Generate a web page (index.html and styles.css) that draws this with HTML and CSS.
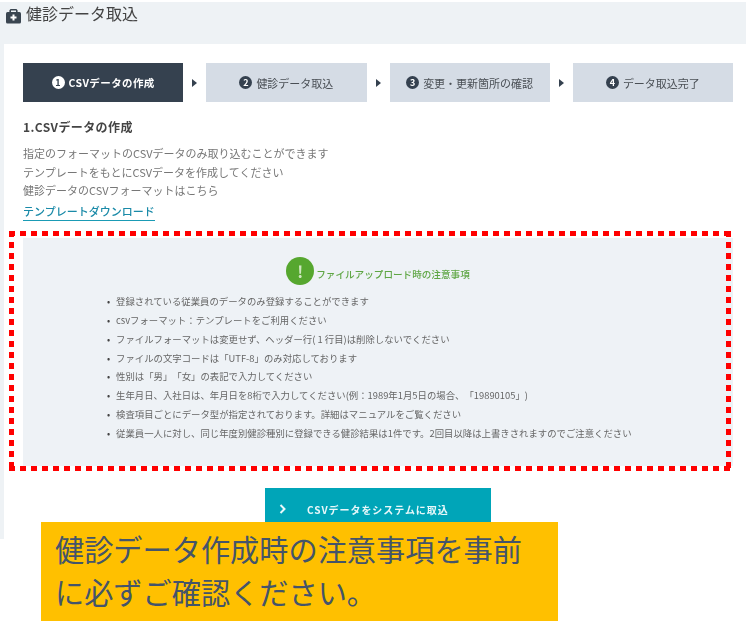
FILE: index.html
```html
<!DOCTYPE html>
<html lang="ja">
<head>
    <meta charset="UTF-8">
    <meta name="viewport" content="width=device-width, initial-scale=1.0">
    <title>健診データ取込</title>
    <link rel="stylesheet" href="styles.css">
</head>
<body>

    <div class="screen">
        <div class="page">
            <h1 class="page-title">
                <svg class="title-icon" width="15" height="15" viewBox="0 0 15 15">
                    <path d="M5 3V1.5h5V3h1.6V1.2L10.4 0H4.6L3.4 1.2V3z" fill="#3a4550"/>
                    <rect x="0" y="3" width="15" height="11.5" rx="1.5" fill="#3a4550"/>
                    <path d="M6.5 5.5h2v2h2v2h-2v2h-2v-2h-2v-2h2z" fill="#fff"/>
                </svg>
                健診データ取込
            </h1>

            <div class="card">
                <div class="steps">
                    <div class="step step-active"><span class="step-num">1</span><b class="step-csv">CSVデータの作成</b></div>
                    <div class="step-arrow"></div>
                    <div class="step"><span class="step-num">2</span>健診データ取込</div>
                    <div class="step-arrow"></div>
                    <div class="step"><span class="step-num">3</span>変更・更新箇所の確認</div>
                    <div class="step-arrow"></div>
                    <div class="step"><span class="step-num">4</span>データ取込完了</div>
                </div>

                <h2 class="section-title">1.CSVデータの作成</h2>
                <p class="intro">指定のフォーマットのCSVデータのみ取り込むことができます</p>
                <p class="intro">テンプレートをもとにCSVデータを作成してください</p>
                <p class="intro">健診データのCSVフォーマットはこちら</p>
                <a class="template-link" href="#">テンプレートダウンロード</a>

                <div class="notice">
                    <div class="notice-head">
                        <span class="notice-icon">!</span>
                        <span class="notice-title">ファイルアップロード時の注意事項</span>
                    </div>
                    <ul class="notice-list">
                        <li>登録されている従業員のデータのみ登録することができます</li>
                        <li>csvフォーマット：テンプレートをご利用ください</li>
                        <li>ファイルフォーマットは変更せず、ヘッダー行( 1 行目)は削除しないでください</li>
                        <li>ファイルの文字コードは「UTF-8」のみ対応しております</li>
                        <li>性別は「男」「女」の表記で入力してください</li>
                        <li>生年月日、入社日は、年月日を8桁で入力してください(例：1989年1月5日の場合、「19890105」)</li>
                        <li>検査項目ごとにデータ型が指定されております。詳細はマニュアルをご覧ください</li>
                        <li>従業員一人に対し、同じ年度別健診種別に登録できる健診結果は1件です。2回目以降は上書きされますのでご注意ください</li>
                    </ul>
                </div>

                <div class="submit-row">
                    <a class="submit-btn" href="#">
                        <svg class="submit-chevron" width="8" height="10" viewBox="0 0 8 10">
                            <path d="M1.5 1l4 4-4 4" fill="none" stroke="#e8f8fa" stroke-width="2"/>
                        </svg>
                        <b>CSVデータをシステムに取込</b>
                    </a>
                </div>
            </div>
        </div>

        <div class="notice-frame"></div>
        <div class="callout">健診データ作成時の注意事項を事前に必ずご確認ください。</div>
    </div>

</body>
</html>
```

FILE: styles.css
```css
* {
    box-sizing: border-box;
}
html, body {
    margin: 0;
    background-color: #fff;
}
body {
    font-family: "Noto Sans CJK JP", "Liberation Sans", sans-serif;
    text-spacing-trim: space-all;
}
.screen {
    position: relative;
    width: 746px;
    height: 628px;
    overflow: hidden;
}
.page {
    margin-top: 2px;
    height: 537px;
    overflow: hidden;
    background-color: #eef2f5;
    filter: blur(0.45px);
}
.page-title {
    display: flex;
    align-items: center;
    gap: 5px;
    height: 42px;
    margin: 0;
    padding: 0 0 20px 6px;
    font-size: 16px;
    font-weight: 400;
    line-height: 24px;
    color: #444;
}
.title-icon {
    flex: none;
    margin-top: 6px;
}
.card {
    height: 495px;
    margin-left: 4px;
    padding: 19px 13px 0 19px;
    background-color: #fff;
}

/* steps */
.steps {
    display: flex;
    height: 39px;
}
.step {
    flex: 1;
    display: flex;
    align-items: center;
    justify-content: center;
    gap: 4px;
    background-color: #d5dce5;
    font-size: 11px;
    color: #4a4f55;
}
.step-active {
    background-color: #35414f;
    color: #fff;
}
.step-csv {
    font-size: 10.5px;
    letter-spacing: 0.4px;
}
.step-num {
    display: block;
    width: 13px;
    height: 13px;
    border-radius: 50%;
    background-color: #35414f;
    color: #fff;
    font-size: 9px;
    font-weight: 700;
    line-height: 13px;
    text-align: center;
}
.step-active .step-num {
    background-color: #fff;
    color: #35414f;
}
.step-arrow {
    flex: none;
    width: 23px;
    display: flex;
    align-items: center;
    justify-content: center;
}
.step-arrow::before {
    content: "";
    border-left: 5px solid #35414f;
    border-top: 4px solid transparent;
    border-bottom: 4px solid transparent;
}

/* intro */
.section-title {
    margin: 16px 0 8px;
    font-size: 12px;
    font-weight: 700;
    letter-spacing: 0.4px;
    line-height: 18px;
    color: #444;
}
.intro {
    margin: 0;
    font-size: 11px;
    line-height: 18.7px;
    color: #777;
}
.template-link {
    display: block;
    width: fit-content;
    margin-top: 3px;
    border-bottom: 1px solid #1a9bb5;
    font-size: 11px;
    font-weight: 500;
    line-height: 17px;
    color: #1a8aa8;
    text-decoration: none;
}

/* notice */
.notice {
    height: 228px;
    margin-top: 17px;
    padding-top: 19px;
    background-color: #eef2f6;
}
.notice-head {
    display: flex;
    align-items: center;
    justify-content: center;
    gap: 2px;
}
.notice-icon {
    width: 28px;
    height: 28px;
    border-radius: 50%;
    background-color: #56a72f;
    color: #cfe6bf;
    font-size: 16px;
    font-weight: 700;
    line-height: 28px;
    text-align: center;
}
.notice-title {
    margin-top: 5px;
    font-size: 9.6px;
    font-weight: 500;
    color: #5fa645;
}
.notice-list {
    margin: 7px 0 0;
    padding-left: 93px;
    list-style: none;
    font-size: 9.4px;
    line-height: 18.8px;
    color: #666;
}
.notice-list li::before {
    content: "•";
    display: inline-block;
    width: 9px;
    margin-left: -9px;
    color: #444;
}

/* submit */
.submit-row {
    display: flex;
    justify-content: center;
    margin-top: 22px;
}
.submit-btn {
    display: flex;
    align-items: center;
    gap: 20px;
    width: 226px;
    height: 42px;
    padding-left: 14px;
    background-color: #00a5b8;
    color: #e8f8fa;
    font-size: 10px;
    letter-spacing: 0.95px;
    text-decoration: none;
}

/* annotations over the screenshot */
.notice-frame {
    position: absolute;
    left: 9px;
    top: 231px;
    width: 722px;
    height: 240px;
    background:
        linear-gradient(90deg, #f00 6px, transparent 6px) left top / 11px 5px repeat-x,
        linear-gradient(90deg, #f00 6px, transparent 6px) left bottom / 11px 5px repeat-x,
        linear-gradient(#f00 6px, transparent 6px) left top / 5px 11px repeat-y,
        linear-gradient(#f00 6px, transparent 6px) right top / 5px 11px repeat-y;
}
.callout {
    position: absolute;
    left: 41px;
    top: 522px;
    width: 517px;
    height: 99px;
    padding: 5px 14px;
    background-color: #ffc000;
    font-size: 29.2px;
    line-height: 43px;
    color: #44546a;
}
```
